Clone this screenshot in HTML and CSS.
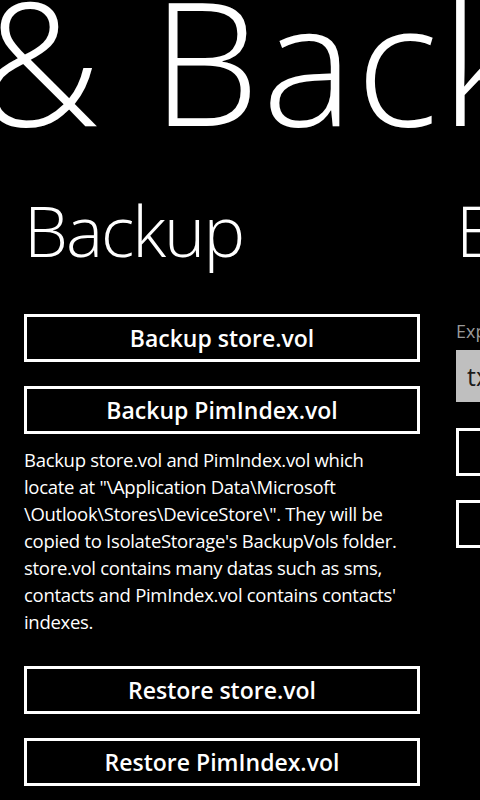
FILE: index.html
```html
<!DOCTYPE html>
<html lang="en">

<head>
    <meta charset="UTF-8">
    <meta name="viewport" content="width=device-width, initial-scale=1.0">
    <title>Export &amp; Backup</title>
    <link rel="stylesheet" href="styles.css">
</head>

<body>
    <div class="panorama">
        <div class="pano-title">&amp; Backup</div>

        <div class="pano-items">
            <section class="pano-item">
                <h2>Backup</h2>
                <button class="btn btn-first">Backup store.vol</button>
                <button class="btn">Backup PimIndex.vol</button>
                <p class="desc">Backup store.vol and PimIndex.vol which<br>locate at "\Application Data\Microsoft<br>\Outlook\Stores\DeviceStore\". They will be copied to IsolateStorage's BackupVols folder. store.vol contains many datas such as sms, contacts and PimIndex.vol contains contacts' indexes.</p>
                <button class="btn btn-restore">Restore store.vol</button>
                <button class="btn">Restore PimIndex.vol</button>
            </section>

            <section class="pano-item">
                <h2>Export</h2>
                <label class="field-label" for="fileName">Export file name</label>
                <input class="textbox" type="text" id="fileName" value="txt">
                <button class="btn btn-side">Export</button>
                <button class="btn">Export all</button>
            </section>
        </div>
    </div>
</body>

</html>
```

FILE: styles.css
```css
:root {
    --bg-color: #000000;
    --text-color: #ffffff;
    --subtle-color: #999999;
    --box-color: #bfbfbf;
}

* {
    box-sizing: border-box;
}

body {
    margin: 0;
    width: 480px;
    height: 800px;
    overflow: hidden;
    background-color: var(--bg-color);
    color: var(--text-color);
    font-family: 'Open Sans', sans-serif;
}

.panorama {
    width: 480px;
    overflow: hidden;
}

.pano-title {
    margin-top: -27px;
    margin-left: -22px;
    height: 172px;
    font-size: 172px;
    font-weight: 300;
    line-height: 1;
    letter-spacing: 3px;
    white-space: nowrap;
}

.pano-items {
    display: flex;
    gap: 36px;
    padding-left: 24px;
}

.pano-item {
    flex: 0 0 396px;
    display: flex;
    flex-direction: column;
}

h2 {
    margin: 50px 0 0;
    font-size: 70px;
    font-weight: 300;
    line-height: 1;
    letter-spacing: -2px;
}

.btn {
    height: 48px;
    margin-top: 24px;
    padding: 0;
    background: transparent;
    color: var(--text-color);
    border: 3px solid var(--text-color);
    font-family: inherit;
    font-size: 23px;
    font-weight: 600;
}

.btn-first {
    margin-top: 49px;
}

.btn-restore {
    margin-top: 31px;
}

.desc {
    margin: 12px 0 0;
    font-size: 18.5px;
    line-height: 27px;
    letter-spacing: -0.3px;
}

.field-label {
    margin-top: 54px;
    font-size: 18px;
    line-height: 24px;
    color: var(--subtle-color);
}

.textbox {
    height: 52px;
    margin-top: 7px;
    padding: 0 11px;
    border: none;
    background-color: var(--box-color);
    color: #1a1a1a;
    font-family: inherit;
    font-size: 25px;
}

.btn-side {
    margin-top: 26px;
}
```
